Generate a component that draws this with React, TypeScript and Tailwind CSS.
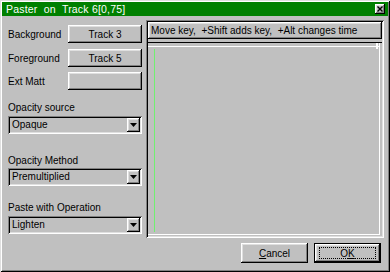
import React from "react";

const raised =
  "shadow-[inset_-1px_-1px_#000,inset_1px_1px_#fff,inset_-2px_-2px_#808080,inset_2px_2px_#dfdfdf]";
const sunken =
  "shadow-[inset_1px_1px_#808080,inset_-1px_-1px_#fff,inset_2px_2px_#000,inset_-2px_-2px_#dfdfdf]";

function Btn({ children, className = "" }: { children?: React.ReactNode; className?: string }) {
  return (
    <div className={`bg-[#c0c0c0] ${raised} flex items-center justify-center ${className}`}>{children}</div>
  );
}

function Select({ value }: { value: string }) {
  return (
    <div className={`w-[134px] h-[18px] bg-[#c0c0c0] ${sunken} flex items-center p-[2px]`}>
      <div className="flex-1 pl-[2px] leading-none">{value}</div>
      <div className={`w-[13px] h-[14px] bg-[#c0c0c0] ${raised} flex items-center justify-center`}>
        <svg width="7" height="4" viewBox="0 0 7 4">
          <path d="M0 0h7L3.5 4z" fill="#000" />
        </svg>
      </div>
    </div>
  );
}

export default function App() {
  return (
    <div
      className={`w-[390px] h-[272px] bg-[#c0c0c0] font-['Liberation_Sans',Arial,sans-serif] text-[10px] text-black p-[2px] flex flex-col shadow-[inset_1px_1px_#dfdfdf,inset_-1px_-1px_#000,inset_2px_2px_#fff,inset_-2px_-2px_#808080]`}
    >
      {/* title bar */}
      <div className="h-[14px] bg-[#008000] flex items-center pl-[4px] pr-[3px]">
        <span className="text-white text-[10.5px] leading-none tracking-[0.2px] whitespace-pre">Paster  on  Track 6[0,75]</span>
        <div className={`ml-auto w-[10px] h-[10px] bg-[#c0c0c0] ${raised} flex items-center justify-center`}>
          <svg width="6" height="6" viewBox="0 0 6 6">
            <path d="M0.5 0.5L5.5 5.5M5.5 0.5L0.5 5.5" stroke="#000" strokeWidth="1.4" />
          </svg>
        </div>
      </div>

      {/* body */}
      <div className="flex pl-[6px] pr-[4px] pt-[4px] gap-[4px]">
        {/* left column */}
        <div className="w-[134px] flex flex-col pt-[5px]">
          <div className="flex items-center h-[18px]">
            <span>Background</span>
            <Btn className="ml-auto w-[74px] h-[18px]">Track 3</Btn>
          </div>
          <div className="flex items-center h-[18px] mt-[6px]">
            <span>Foreground</span>
            <Btn className="ml-auto w-[74px] h-[18px]">Track 5</Btn>
          </div>
          <div className="flex items-center h-[18px] mt-[5px]">
            <span>Ext Matt</span>
            <Btn className="ml-auto w-[74px] h-[18px]" />
          </div>
          <div className="h-[12px] mt-[11px] flex items-center">Opacity source</div>
          <div className="mt-[3px]">
            <Select value="Opaque" />
          </div>
          <div className="h-[12px] mt-[20px] flex items-center">Opacity Method</div>
          <div className="mt-[2px]">
            <Select value="Premultiplied" />
          </div>
          <div className="h-[12px] mt-[15px] flex items-center">Paste with Operation</div>
          <div className="mt-[3px]">
            <Select value="Lighten" />
          </div>
        </div>

        {/* right panel */}
        <div className={`w-[238px] h-[218px] bg-[#c0c0c0] ${sunken} p-[2px] flex flex-col`}>
          <div className={`h-[17px] ${raised} flex items-center pl-[3px] whitespace-pre leading-none`}>
            Move key,  +Shift adds key,  +Alt changes time
          </div>
          <div className="mt-[3px] h-[1px] bg-black" />
          <div className="relative flex-1 mr-[2px] mb-[1px] border-b border-r border-white">
            <div className="h-[4px] border-b border-white" />
            <div className="absolute right-[1px] top-0 w-[2px] h-[6px] bg-white" />
            <div className="absolute left-[6px] top-[6px] bottom-[2px] w-[1px] bg-[#70f070]" />
          </div>
        </div>
      </div>

      {/* bottom buttons */}
      <div className="flex justify-end gap-[6px] pr-[7px] mt-[5px]">
        <Btn className="w-[67px] h-[20px]">
          <span>
            <span className="underline">C</span>ancel
          </span>
        </Btn>
        <div className="w-[67px] h-[20px] border border-black">
          <Btn className="w-full h-full">
            <div className="w-[57px] h-[12px] border border-dotted border-black flex items-center justify-center">
              <span>
                O<span className="underline">K</span>
              </span>
            </div>
          </Btn>
        </div>
      </div>
    </div>
  );
}
